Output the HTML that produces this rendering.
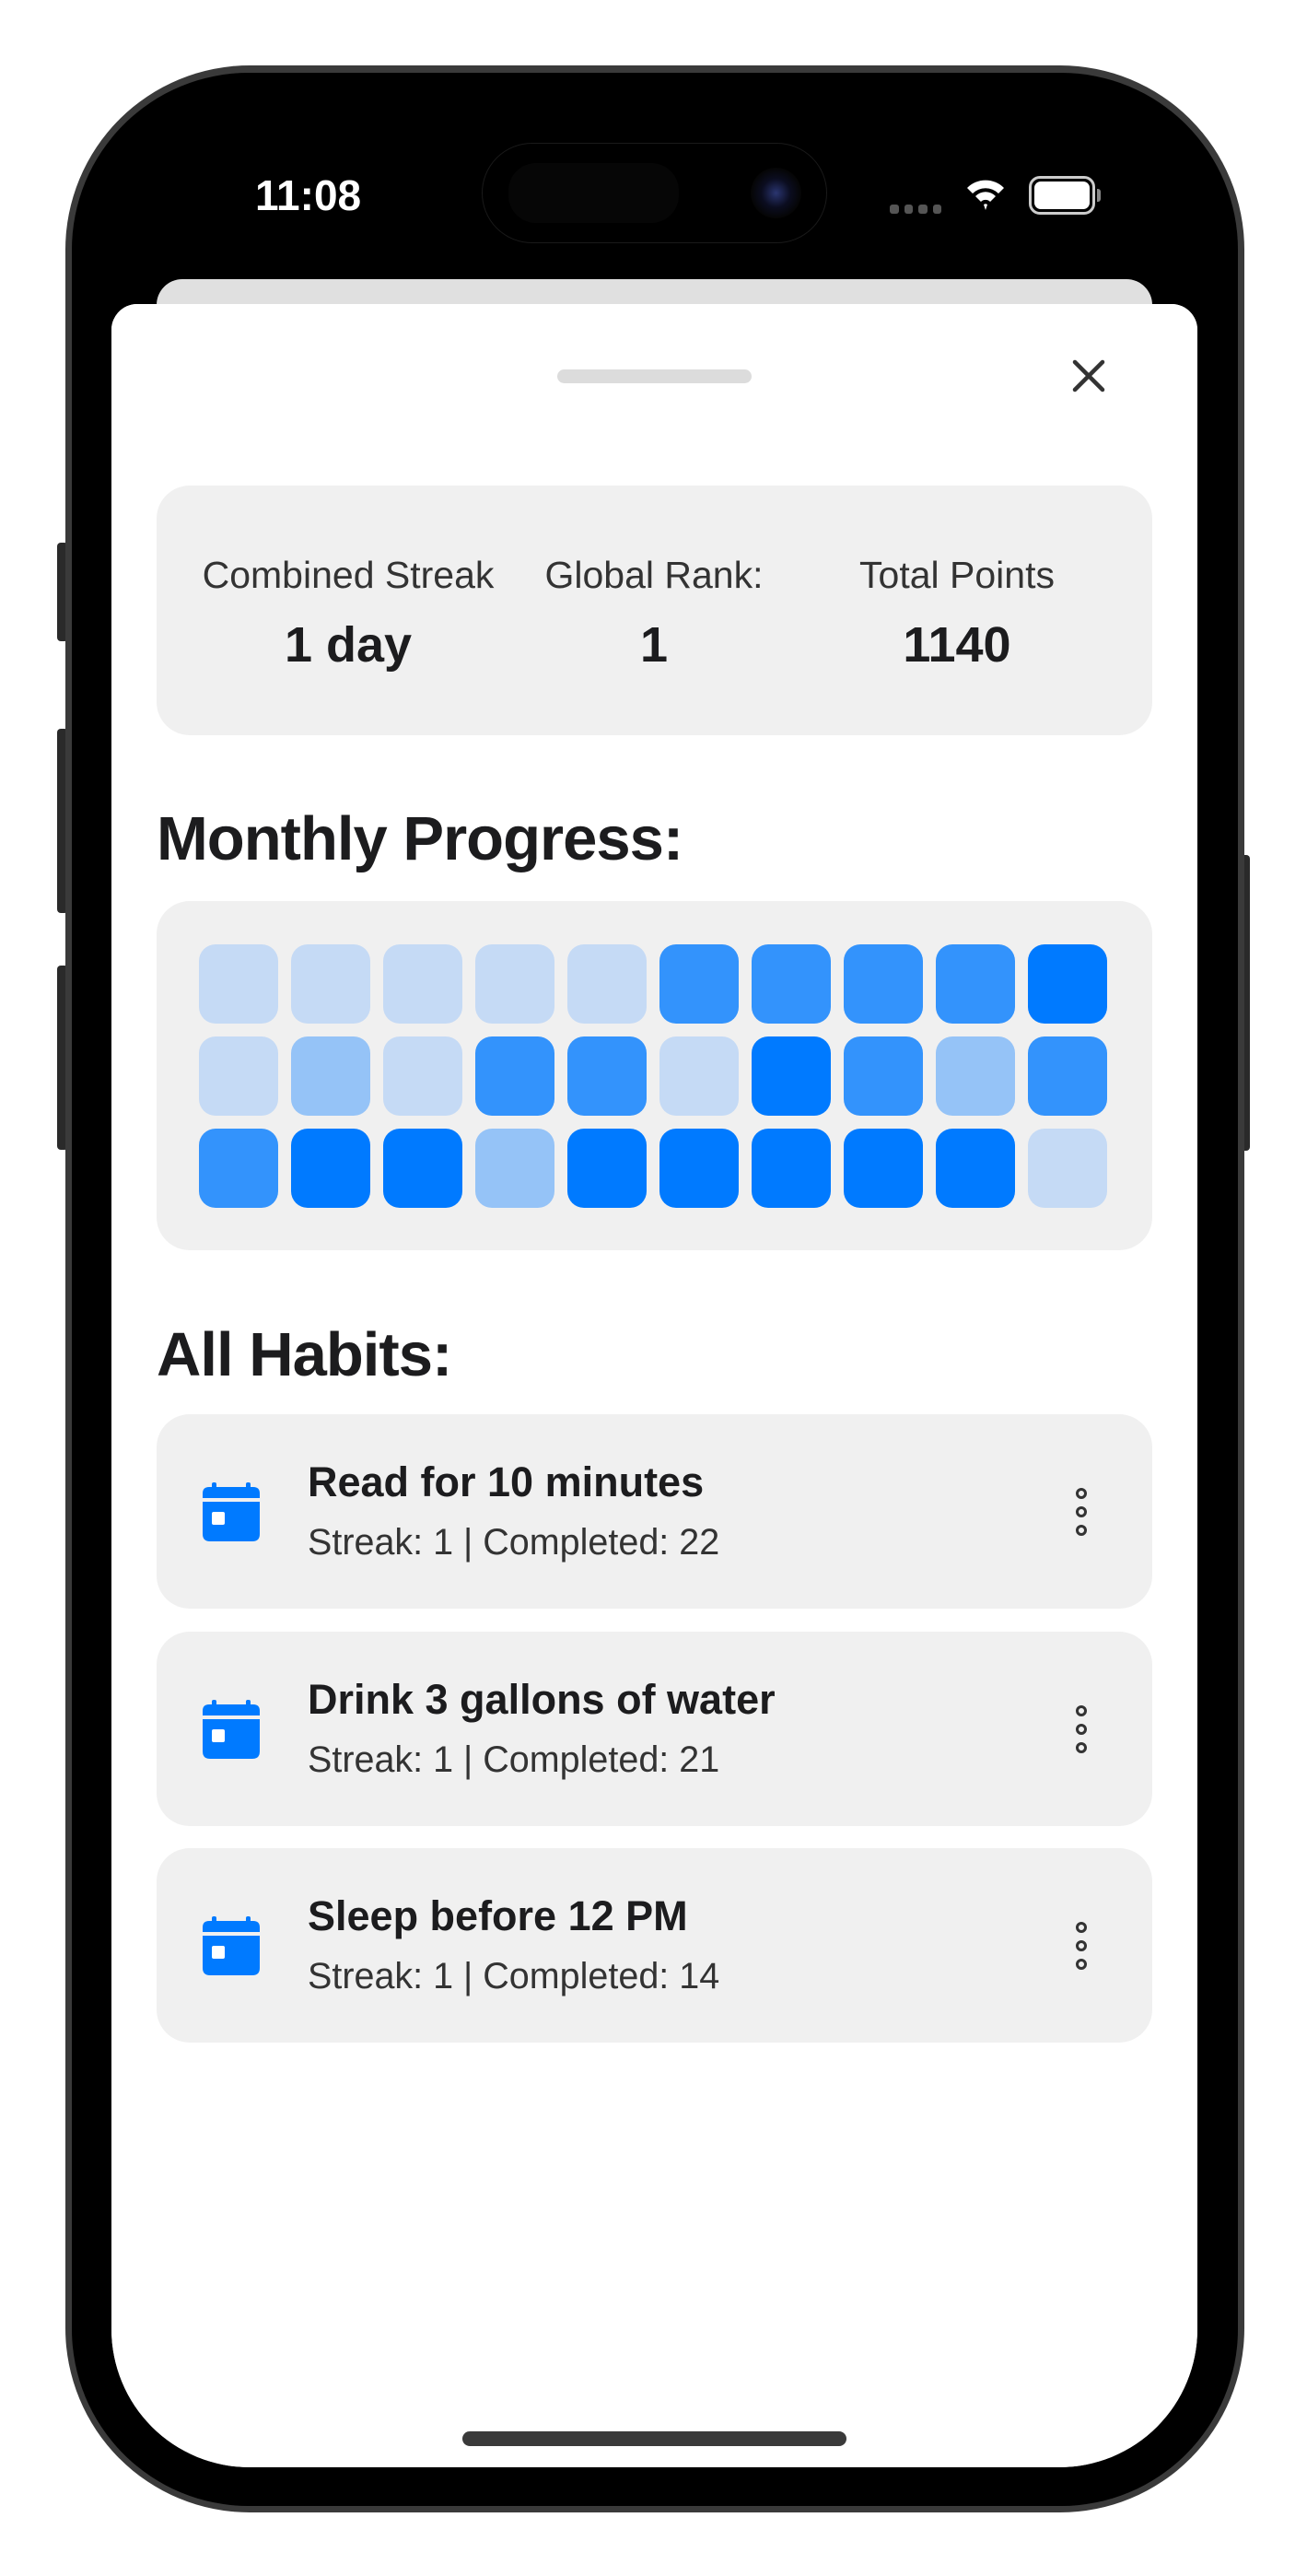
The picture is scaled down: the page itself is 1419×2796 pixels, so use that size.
<!DOCTYPE html>
<html><head><meta charset="utf-8"><style>
*{margin:0;padding:0;box-sizing:border-box}
body{width:1419px;height:2796px;background:#fff;position:relative;overflow:hidden;font-family:"Liberation Sans",sans-serif;color:#1c1c1e}
.a{position:absolute}
.btn{position:absolute;background:#2a2a2a;border-radius:4px}
.card{position:absolute;left:170px;width:1081px;background:#f0f0f0;border-radius:36px}
.lbl{position:absolute;font-size:41px;color:#333;text-align:center;width:380px;top:74px}
.val{position:absolute;font-size:54px;font-weight:bold;color:#1c1c1e;text-align:center;width:380px;top:142px}
.h{position:absolute;left:170px;font-size:67px;font-weight:bold;letter-spacing:-1px}
.c{position:absolute;width:86px;height:86px;border-radius:18px}
.L{background:#c5daf5}.ML{background:#95c3f7}.M{background:#3393fc}.D{background:#007aff}
.t{position:absolute;left:164px;top:48px;font-size:45px;font-weight:bold}
.s{position:absolute;left:164px;top:117px;font-size:39.5px;color:#333}
</style></head><body>
<div class="btn" style="left:62px;top:589px;width:12px;height:107px"></div>
<div class="btn" style="left:62px;top:791px;width:12px;height:200px"></div>
<div class="btn" style="left:62px;top:1048px;width:12px;height:200px"></div>
<div class="btn" style="left:1345px;top:928px;width:12px;height:321px"></div>
<div class="a" style="left:71px;top:71px;width:1280px;height:2656px;border-radius:200px;background:#3a3a3a;"></div>
<div class="a" style="left:78px;top:79px;width:1266px;height:2641px;border-radius:192px;background:#000;"></div>
<div class="a" style="left:121px;top:120px;width:1179px;height:2558px;border-radius:150px;background:#000;overflow:hidden">
  <div class="a" style="left:49px;top:183px;width:1081px;height:80px;border-radius:28px;background:#e0e0e0"></div>
  <div class="a" style="left:0;top:210px;width:1179px;height:2400px;border-radius:28px 28px 0 0;background:#fff"></div>
</div>
<div class="a" style="left:121px;top:330px;width:1179px;height:2348px;background:#fff;border-radius:28px 28px 150px 150px"></div>
<div class="a" style="left:277px;top:185px;font-size:46px;font-weight:bold;color:#fff">11:08</div>
<div class="a" style="left:523px;top:155px;width:375px;height:109px;border-radius:55px;background:#000;border:1px solid #1a1a1a"></div>
<div class="a" style="left:552px;top:177px;width:185px;height:65px;border-radius:30px;background:#060606"></div>
<div class="a" style="left:815px;top:182px;width:55px;height:55px;border-radius:50%;background:radial-gradient(circle,#2a3570 0,#0b0d20 40%,#050505 70%)"></div>
<div class="a" style="left:966px;top:222px;width:56px;height:10px;display:flex;gap:6px"><i style="flex:1;background:#555;border-radius:3px"></i><i style="flex:1;background:#555;border-radius:3px"></i><i style="flex:1;background:#555;border-radius:3px"></i><i style="flex:1;background:#555;border-radius:3px"></i></div>
<svg class="a" style="left:1048px;top:190px" width="44" height="40" viewBox="0 0 44 40"><path d="M2 14 A28 28 0 0 1 42 14 L36 20 A20 20 0 0 0 8 20Z M11 23 A15 15 0 0 1 33 23 L27 29 A7 7 0 0 0 17 29Z M20 32 A3 3 0 0 1 24 32 L22 38Z" fill="#fff"/></svg>
<div class="a" style="left:1117px;top:191px;width:72px;height:42px;border:3px solid #ccc;border-radius:12px;padding:3px"><div style="width:100%;height:100%;background:#fff;border-radius:7px"></div></div>
<div class="a" style="left:1191px;top:205px;width:4px;height:14px;background:#888;border-radius:0 3px 3px 0"></div>

<div class="a" style="left:605px;top:401px;width:211px;height:15px;border-radius:8px;background:#dcdcdc"></div>
<svg class="a" style="left:1163px;top:389px" width="38" height="38" viewBox="0 0 38 38"><path d="M4 4L34 34M34 4L4 34" stroke="#333" stroke-width="4.5" stroke-linecap="round"/></svg>

<div class="card" style="top:527px;height:271px">
  <div class="lbl" style="left:18px">Combined Streak</div>
  <div class="lbl" style="left:350px">Global Rank:</div>
  <div class="lbl" style="left:679px">Total Points</div>
  <div class="val" style="left:18px">1 day</div>
  <div class="val" style="left:350px">1</div>
  <div class="val" style="left:679px">1140</div>
</div>
<div class="h" style="top:872px">Monthly Progress:</div>
<div class="card" style="top:978px;height:379px" id="g"></div>
<div class="h" style="top:1432px">All Habits:</div>

<div class="card" style="top:1535px;height:211px">
  <svg class="a" style="left:50px;top:74px" width="62" height="64" viewBox="0 0 62 64"><rect x="10" y="0" width="5" height="10" rx="2" fill="#007aff"/><rect x="47" y="0" width="5" height="10" rx="2" fill="#007aff"/><path d="M0 12Q0 5 7 5H55Q62 5 62 12V17H0Z" fill="#007aff"/><path d="M0 21H62V56Q62 64 54 64H8Q0 64 0 56Z" fill="#007aff"/><rect x="10" y="32" width="14" height="14" rx="2" fill="#fff"/></svg>
  <div class="t">Read for 10 minutes</div><div class="s">Streak: 1 | Completed: 22</div>
  <svg class="a" style="left:996px;top:80px" width="16" height="52" viewBox="0 0 16 52"><circle cx="8" cy="6" r="4.5" fill="none" stroke="#333" stroke-width="3"/><circle cx="8" cy="26" r="4.5" fill="none" stroke="#333" stroke-width="3"/><circle cx="8" cy="46" r="4.5" fill="none" stroke="#333" stroke-width="3"/></svg>
</div>
<div class="card" style="top:1771px;height:211px">
  <svg class="a" style="left:50px;top:74px" width="62" height="64" viewBox="0 0 62 64"><rect x="10" y="0" width="5" height="10" rx="2" fill="#007aff"/><rect x="47" y="0" width="5" height="10" rx="2" fill="#007aff"/><path d="M0 12Q0 5 7 5H55Q62 5 62 12V17H0Z" fill="#007aff"/><path d="M0 21H62V56Q62 64 54 64H8Q0 64 0 56Z" fill="#007aff"/><rect x="10" y="32" width="14" height="14" rx="2" fill="#fff"/></svg>
  <div class="t">Drink 3 gallons of water</div><div class="s">Streak: 1 | Completed: 21</div>
  <svg class="a" style="left:996px;top:80px" width="16" height="52" viewBox="0 0 16 52"><circle cx="8" cy="6" r="4.5" fill="none" stroke="#333" stroke-width="3"/><circle cx="8" cy="26" r="4.5" fill="none" stroke="#333" stroke-width="3"/><circle cx="8" cy="46" r="4.5" fill="none" stroke="#333" stroke-width="3"/></svg>
</div>
<div class="card" style="top:2006px;height:211px">
  <svg class="a" style="left:50px;top:74px" width="62" height="64" viewBox="0 0 62 64"><rect x="10" y="0" width="5" height="10" rx="2" fill="#007aff"/><rect x="47" y="0" width="5" height="10" rx="2" fill="#007aff"/><path d="M0 12Q0 5 7 5H55Q62 5 62 12V17H0Z" fill="#007aff"/><path d="M0 21H62V56Q62 64 54 64H8Q0 64 0 56Z" fill="#007aff"/><rect x="10" y="32" width="14" height="14" rx="2" fill="#fff"/></svg>
  <div class="t">Sleep before 12 PM</div><div class="s">Streak: 1 | Completed: 14</div>
  <svg class="a" style="left:996px;top:80px" width="16" height="52" viewBox="0 0 16 52"><circle cx="8" cy="6" r="4.5" fill="none" stroke="#333" stroke-width="3"/><circle cx="8" cy="26" r="4.5" fill="none" stroke="#333" stroke-width="3"/><circle cx="8" cy="46" r="4.5" fill="none" stroke="#333" stroke-width="3"/></svg>
</div>
<div class="a" style="left:502px;top:2639px;width:417px;height:16px;border-radius:8px;background:#3a3a3a"></div>

<div class="a" style="left:0;top:0" id="cells">
<div class="c L" style="left:216px;top:1025px"></div><div class="c L" style="left:316px;top:1025px"></div><div class="c L" style="left:416px;top:1025px"></div><div class="c L" style="left:516px;top:1025px"></div><div class="c L" style="left:616px;top:1025px"></div><div class="c M" style="left:716px;top:1025px"></div><div class="c M" style="left:816px;top:1025px"></div><div class="c M" style="left:916px;top:1025px"></div><div class="c M" style="left:1016px;top:1025px"></div><div class="c D" style="left:1116px;top:1025px"></div>
<div class="c L" style="left:216px;top:1125px"></div><div class="c ML" style="left:316px;top:1125px"></div><div class="c L" style="left:416px;top:1125px"></div><div class="c M" style="left:516px;top:1125px"></div><div class="c M" style="left:616px;top:1125px"></div><div class="c L" style="left:716px;top:1125px"></div><div class="c D" style="left:816px;top:1125px"></div><div class="c M" style="left:916px;top:1125px"></div><div class="c ML" style="left:1016px;top:1125px"></div><div class="c M" style="left:1116px;top:1125px"></div>
<div class="c M" style="left:216px;top:1225px"></div><div class="c D" style="left:316px;top:1225px"></div><div class="c D" style="left:416px;top:1225px"></div><div class="c ML" style="left:516px;top:1225px"></div><div class="c D" style="left:616px;top:1225px"></div><div class="c D" style="left:716px;top:1225px"></div><div class="c D" style="left:816px;top:1225px"></div><div class="c D" style="left:916px;top:1225px"></div><div class="c D" style="left:1016px;top:1225px"></div><div class="c L" style="left:1116px;top:1225px"></div>
</div>
</body></html>
